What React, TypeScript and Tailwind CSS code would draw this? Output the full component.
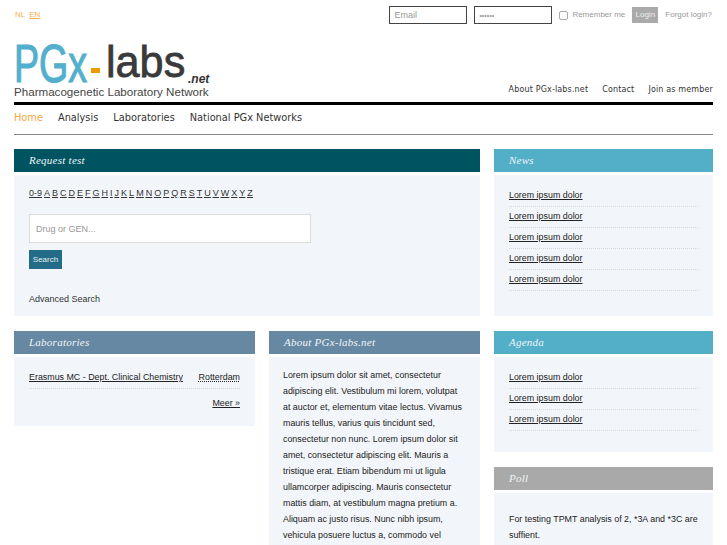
import { FC, ReactNode } from "react";

const sans = "font-['Liberation_Sans',Arial,sans-serif]";
const letters = "ABCDEFGHIJKLMNOPQRSTUVWXYZ".split("");
const lipsum =
  "Lorem ipsum dolor sit amet, consectetur adipiscing elit. Vestibulum mi lorem, volutpat at auctor et, elementum vitae lectus. Vivamus mauris tellus, varius quis tincidunt sed, consectetur non nunc. Lorem ipsum dolor sit amet, consectetur adipiscing elit. Mauris a tristique erat. Etiam bibendum mi ut ligula ullamcorper adipiscing. Mauris consectetur mattis diam, at vestibulum magna pretium a. Aliquam ac justo risus. Nunc nibh ipsum, vehicula posuere luctus a, commodo vel";

interface PanelProps {
  title: string;
  color: string;
  className?: string;
  children: ReactNode;
}

const Panel: FC<PanelProps> = ({ title, color, className, children }) => (
  <section className={className}>
    <h2
      className={`h-[23px] pl-[15px] font-['Liberation_Serif',serif] text-[11px] italic leading-[23px] tracking-[0.25px] text-[#eef5f7] ${color}`}
    >
      {title}
    </h2>
    <div className="mt-[3px] bg-[#f2f6fa]">{children}</div>
  </section>
);

const LinkList: FC<{ count: number; className: string }> = ({ count, className }) => (
  <ul className={`px-[15px] pt-[11px] ${className}`}>
    {Array.from({ length: count }).map((_, i) => (
      <li
        key={i}
        className="h-[21px] border-b border-dotted border-[#d5dade] text-[8.9px] leading-[18px] text-[#222]"
      >
        <a className="underline">Lorem ipsum dolor</a>
      </li>
    ))}
  </ul>
);

const Logo: FC = () => (
  <div className="relative h-[56px] w-[196px]">
    <span className={`absolute left-0 top-[-12px] origin-left scale-x-[0.71] text-[53px] leading-[60px] text-[#53b0cc] [-webkit-text-stroke:1.2px_#53b0cc] ${sans}`}>
      PGx
    </span>
    <span className="absolute left-[77px] top-[22px] h-[5px] w-[9px] bg-[#ee9a00]" />
    <span className={`absolute left-[92px] top-[-10px] origin-left scale-x-[0.96] text-[45px] leading-[52px] text-[#3a3a3a] [-webkit-text-stroke:0.8px_#3a3a3a] ${sans}`}>
      labs
    </span>
    <span className={`absolute left-[174px] top-[25px] text-[12px] font-bold italic leading-[16px] text-[#333] ${sans}`}>
      .net
    </span>
    <span className={`absolute left-0 top-[39px] whitespace-nowrap text-[11.6px] leading-[14px] text-[#444] ${sans}`}>
      Pharmacogenetic Laboratory Network
    </span>
  </div>
);

const App: FC = () => (
  <div className={`h-[545px] w-[727px] overflow-hidden bg-white px-[14px] ${sans}`}>
    <div className="flex h-[30px] items-center text-[8px] text-[#999]">
      <div className="ml-[1px] flex gap-[4px] text-[#f5b050]">
        <a>NL</a>
        <a className="underline">EN</a>
      </div>
      <input
        placeholder="Email"
        className="ml-auto h-[18px] w-[78px] border border-[#444] px-[4px] text-[9px] placeholder:text-[#999]"
      />
      <input
        type="password"
        defaultValue="123456"
        className="ml-[7px] h-[18px] w-[78px] border border-[#444] px-[4px] text-[7px]"
      />
      <span className="ml-[7px] h-[9px] w-[9px] rounded-[2px] border border-[#aaa] bg-white" />
      <span className="ml-[4px]">Remember me</span>
      <button className="ml-[7px] h-[16px] w-[26px] bg-[#aaa] text-[8px] text-[#eee]">Login</button>
      <a className="ml-[7px] mr-[1px]">Forgot login?</a>
    </div>

    <header className="flex items-end justify-between pt-[16px]">
      <Logo />
      <nav className="flex gap-[14px] pb-[6px] font-['DejaVu_Sans',sans-serif] text-[8px] tracking-[0.15px] text-[#333]">
        <a>About PGx-labs.net</a>
        <a>Contact</a>
        <a>Join as member</a>
      </nav>
    </header>

    <div className="h-[3px] bg-black" />

    <nav className="flex h-[30px] items-center gap-[15px] border-b border-[#888] pb-[2px] font-['DejaVu_Sans',sans-serif] text-[9.8px] text-[#333]">
      <a className="text-[#f5a840]">Home</a>
      <a>Analysis</a>
      <a>Laboratories</a>
      <a>National PGx Networks</a>
    </nav>

    <main className="mt-[14px] flex gap-[14px]">
      <div className="flex w-[466px] flex-col gap-[15px]">
        <Panel title="Request test" color="bg-[#005462]">
          <div className="h-[141px] px-[15px] pt-[11px]">
            <p className="flex gap-[2px] text-[9px] leading-[14px] text-[#333] underline">
              <a>0-9</a>
              {letters.map((l) => (
                <a key={l}>{l}</a>
              ))}
            </p>
            <input
              placeholder="Drug or GEN..."
              className="mt-[14px] block h-[29px] w-[282px] border border-[#ddd] bg-white px-[6px] text-[9px] placeholder:text-[#999]"
            />
            <button className="mt-[7px] block h-[19px] w-[33px] bg-[#236c87] text-[8px] text-[#e6eef2]">
              Search
            </button>
            <p className="mt-[23px] text-[9px] leading-[14px] text-[#333]">Advanced Search</p>
          </div>
        </Panel>

        <div className="flex items-start gap-[14px]">
          <Panel title="Laboratories" color="bg-[#6688a2]" className="w-[241px]">
            <div className="h-[69px] px-[15px] pt-[11px] text-[8.9px] text-[#222]">
              <div className="flex h-[21px] justify-between whitespace-nowrap border-b border-dotted border-[#d5dade] leading-[18px]">
                <a className="underline">Erasmus MC - Dept. Clinical Chemistry</a>
                <a className="underline decoration-dotted">Rotterdam</a>
              </div>
              <p className="mt-[7px] text-right leading-[14px]">
                <a className="underline">Meer »</a>
              </p>
            </div>
          </Panel>
          <Panel title="About PGx-labs.net" color="bg-[#6688a2]" className="w-[211px]">
            <p className="pb-[20px] pl-[14px] pr-[17px] pt-[10px] text-[8.9px] leading-[16px] text-[#222]">{lipsum}</p>
          </Panel>
        </div>
      </div>

      <aside className="flex w-[219px] flex-col gap-[15px]">
        <Panel title="News" color="bg-[#53aec8]">
          <LinkList count={5} className="pb-[25px]" />
        </Panel>
        <Panel title="Agenda" color="bg-[#53aec8]">
          <LinkList count={3} className="pb-[21px]" />
        </Panel>
        <Panel title="Poll" color="bg-[#a9a9a9]">
          <p className="pb-[20px] pl-[15px] pr-[10px] pt-[18px] text-[8.9px] leading-[16px] text-[#222]">
            For testing TPMT analysis of 2, *3A and *3C are suffient.
          </p>
        </Panel>
      </aside>
    </main>
  </div>
);

export default App;
